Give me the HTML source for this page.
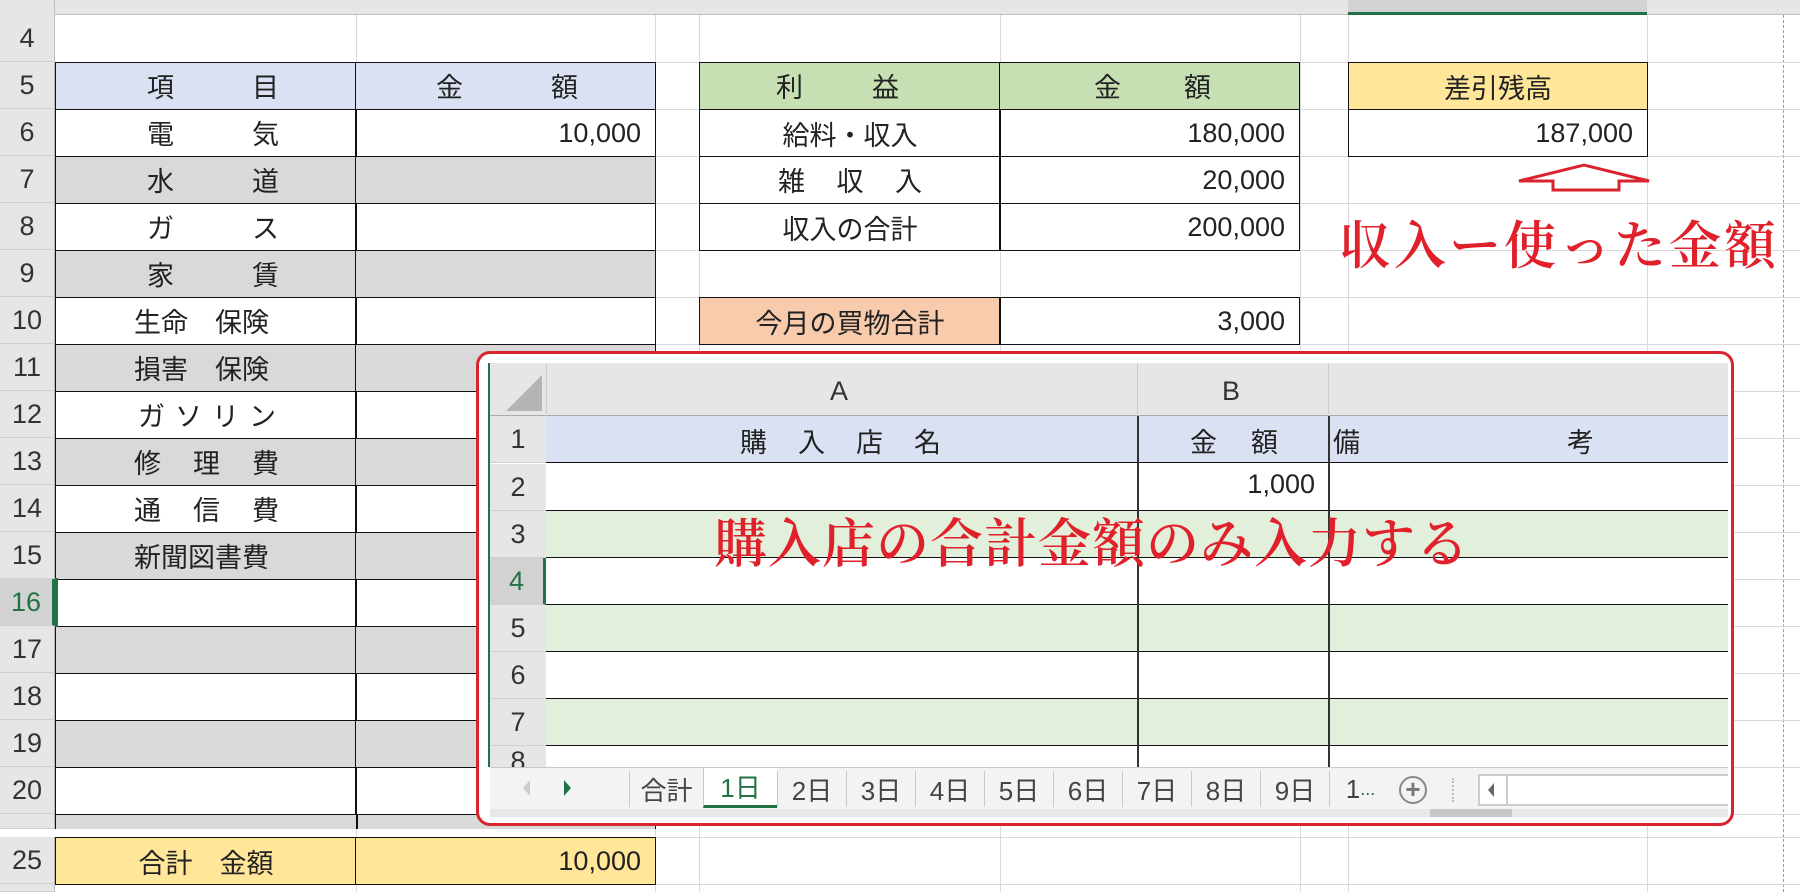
<!DOCTYPE html>
<html><head><meta charset="utf-8">
<style>
*{margin:0;padding:0;box-sizing:border-box}
body{width:1800px;height:892px;position:relative;overflow:hidden;background:#fff;font-family:"Liberation Sans","Noto Sans CJK JP",sans-serif;color:#222}
.a{position:absolute}
.hl{position:absolute;left:55px;width:1745px;height:1px;background:#d9d9d9}
.vl{position:absolute;top:15px;height:877px;width:1px;background:#d9d9d9}
.rh{position:absolute;left:0;width:55px;height:47px;background:#e6e6e6;border-bottom:1px solid #cfcfcf;border-right:1px solid #bdbdbd;font-size:27px;display:flex;align-items:center;justify-content:center;color:#333}
.c{position:absolute;height:48px;border:1.5px solid #111;font-size:27px;display:flex;align-items:center}
.sp{display:flex;justify-content:space-between;position:absolute}
.num{justify-content:flex-end;padding-right:14px}
.ctr{justify-content:center}
.ih{position:absolute;background:#e6e6e6}
.irh{position:absolute;left:490px;width:56px;height:47px;background:#e6e6e6;font-size:27px;display:flex;align-items:center;justify-content:center;color:#333;border-bottom:1px solid #d0d0d0}
.ir{position:absolute;left:546px;width:1182px;height:47px;border-bottom:1.5px solid #111}
.tab{position:absolute;top:771px;height:36px;width:69px;font-size:26px;display:flex;align-items:center;justify-content:center;color:#444;border-left:1px solid #c8c8c8}
</style></head><body>

<div class="a" style="left:0;top:0;width:1800px;height:15px;background:#e6e6e6;border-bottom:1px solid #bdbdbd"></div>
<div class="a" style="left:1348px;top:0;width:299px;height:15px;background:#d2d2d2;border-bottom:3px solid #217346"></div>
<div class="a" style="left:0;top:0;width:55px;height:15px;background:#e6e6e6;border-right:1px solid #bdbdbd"></div>

<div class="vl" style="left:356px"></div><div class="vl" style="left:655px"></div><div class="vl" style="left:699px"></div><div class="vl" style="left:1000px"></div><div class="vl" style="left:1300px"></div><div class="vl" style="left:1348px"></div><div class="vl" style="left:1647px"></div>
<div class="a" style="left:1783px;top:15px;height:877px;border-left:1px dashed #999"></div>
<div class="hl" style="top:62px"></div><div class="hl" style="top:109px"></div><div class="hl" style="top:156px"></div><div class="hl" style="top:203px"></div><div class="hl" style="top:250px"></div><div class="hl" style="top:297px"></div><div class="hl" style="top:344px"></div><div class="hl" style="top:391px"></div><div class="hl" style="top:438px"></div><div class="hl" style="top:485px"></div><div class="hl" style="top:532px"></div><div class="hl" style="top:579px"></div><div class="hl" style="top:626px"></div><div class="hl" style="top:673px"></div><div class="hl" style="top:720px"></div><div class="hl" style="top:767px"></div><div class="hl" style="top:814px"></div><div class="hl" style="top:837px"></div><div class="hl" style="top:884px"></div>

<div class="rh" style="top:15px">4</div><div class="rh" style="top:62px">5</div><div class="rh" style="top:109px">6</div><div class="rh" style="top:156px">7</div><div class="rh" style="top:203px">8</div><div class="rh" style="top:250px">9</div><div class="rh" style="top:297px">10</div><div class="rh" style="top:344px">11</div><div class="rh" style="top:391px">12</div><div class="rh" style="top:438px">13</div><div class="rh" style="top:485px">14</div><div class="rh" style="top:532px">15</div>
<div class="rh" style="top:579px;background:#d2d2d2;color:#217346;border-right:3px solid #217346">16</div>
<div class="rh" style="top:626px">17</div><div class="rh" style="top:673px">18</div><div class="rh" style="top:720px">19</div><div class="rh" style="top:767px">20</div>
<div class="rh" style="top:814px;height:15px"></div>
<div class="rh" style="top:837px">25</div>
<div class="rh" style="top:884px;height:8px"></div>

<div class="c" style="left:55px;top:62px;width:302px;background:#d9e1f2"></div><div class="c num" style="left:355px;top:62px;width:301px;background:#d9e1f2"></div>
<div class="sp" style="left:147px;top:66px;width:132px;font-size:27px"><span>項</span><span>目</span></div>
<div class="sp" style="left:436px;top:66px;width:142px;font-size:27px"><span>金</span><span>額</span></div>

<div class="c" style="left:55px;top:109px;width:302px"></div><div class="c num" style="left:355px;top:109px;width:301px">10,000</div>
<div class="c" style="left:55px;top:156px;width:302px;background:#d9d9d9"></div><div class="c" style="left:355px;top:156px;width:301px;background:#d9d9d9"></div>
<div class="c" style="left:55px;top:203px;width:302px"></div><div class="c" style="left:355px;top:203px;width:301px"></div>
<div class="c" style="left:55px;top:250px;width:302px;background:#d9d9d9"></div><div class="c" style="left:355px;top:250px;width:301px;background:#d9d9d9"></div>
<div class="c" style="left:55px;top:297px;width:302px"></div><div class="c" style="left:355px;top:297px;width:301px"></div>
<div class="c" style="left:55px;top:344px;width:302px;background:#d9d9d9"></div><div class="c" style="left:355px;top:344px;width:301px;background:#d9d9d9"></div>
<div class="c" style="left:55px;top:391px;width:302px"></div><div class="c" style="left:355px;top:391px;width:301px"></div>
<div class="c" style="left:55px;top:438px;width:302px;background:#d9d9d9"></div><div class="c" style="left:355px;top:438px;width:301px;background:#d9d9d9"></div>
<div class="c" style="left:55px;top:485px;width:302px"></div><div class="c" style="left:355px;top:485px;width:301px"></div>
<div class="c" style="left:55px;top:532px;width:302px;background:#d9d9d9"></div><div class="c" style="left:355px;top:532px;width:301px;background:#d9d9d9"></div>
<div class="c" style="left:55px;top:579px;width:302px"></div><div class="c" style="left:355px;top:579px;width:301px"></div>
<div class="c" style="left:55px;top:626px;width:302px;background:#d9d9d9"></div><div class="c" style="left:355px;top:626px;width:301px;background:#d9d9d9"></div>
<div class="c" style="left:55px;top:673px;width:302px"></div><div class="c" style="left:355px;top:673px;width:301px"></div>
<div class="c" style="left:55px;top:720px;width:302px;background:#d9d9d9"></div><div class="c" style="left:355px;top:720px;width:301px;background:#d9d9d9"></div>
<div class="c" style="left:55px;top:767px;width:302px"></div><div class="c" style="left:355px;top:767px;width:301px"></div>
<div class="a" style="left:55px;top:815px;width:601px;height:14px;background:#d9d9d9;border-left:1.5px solid #111;border-right:1.5px solid #111"></div>
<div class="a" style="left:356px;top:815px;width:1.5px;height:14px;background:#111"></div>
<div class="a" style="left:55px;top:578px;width:3px;height:49px;background:#217346"></div>

<div class="sp" style="left:147px;top:113px;width:132px;font-size:27px"><span>電</span><span>気</span></div>
<div class="sp" style="left:147px;top:160px;width:132px;font-size:27px"><span>水</span><span>道</span></div>
<div class="sp" style="left:147px;top:207px;width:132px;font-size:27px"><span>ガ</span><span>ス</span></div>
<div class="sp" style="left:147px;top:254px;width:132px;font-size:27px"><span>家</span><span>賃</span></div>
<div class="a" style="left:134px;top:301px;font-size:27px">生命　保険</div>
<div class="a" style="left:134px;top:348px;font-size:27px">損害　保険</div>
<div class="sp" style="left:138px;top:395px;width:138px;font-size:27px"><span>ガ</span><span>ソ</span><span>リ</span><span>ン</span></div>
<div class="sp" style="left:134px;top:442px;width:145px;font-size:27px"><span>修</span><span>理</span><span>費</span></div>
<div class="sp" style="left:134px;top:489px;width:145px;font-size:27px"><span>通</span><span>信</span><span>費</span></div>
<div class="a" style="left:134px;top:536px;font-size:27px">新聞図書費</div>

<div class="c ctr" style="left:55px;top:837px;width:302px;background:#ffe699">合計　金額</div>
<div class="c num" style="left:355px;top:837px;width:301px;background:#ffe699">10,000</div>

<div class="c" style="left:699px;top:62px;width:302px;background:#c6e0b4"></div><div class="c" style="left:999px;top:62px;width:301px;background:#c6e0b4"></div>
<div class="sp" style="left:776px;top:66px;width:123px;font-size:27px"><span>利</span><span>益</span></div>
<div class="sp" style="left:1094px;top:66px;width:117px;font-size:27px"><span>金</span><span>額</span></div>
<div class="c ctr" style="left:699px;top:109px;width:302px">給料・収入</div><div class="c num" style="left:999px;top:109px;width:301px">180,000</div>
<div class="c" style="left:699px;top:156px;width:302px"></div><div class="c num" style="left:999px;top:156px;width:301px">20,000</div>
<div class="sp" style="left:778px;top:160px;width:144px;font-size:27px"><span>雑</span><span>収</span><span>入</span></div>
<div class="c ctr" style="left:699px;top:203px;width:302px">収入の合計</div><div class="c num" style="left:999px;top:203px;width:301px">200,000</div>
<div class="c ctr" style="left:699px;top:297px;width:302px;background:#f8cbad">今月の買物合計</div><div class="c num" style="left:999px;top:297px;width:301px">3,000</div>

<div class="c ctr" style="left:1348px;top:62px;width:300px;background:#ffe699">差引残高</div>
<div class="c num" style="left:1348px;top:109px;width:300px">187,000</div>

<svg class="a" style="left:1515px;top:162px" width="140" height="30"><path d="M4 19 L69 3 L134 19 L104 19 L104 28 L38 28 L38 19 Z" fill="none" stroke="#d9242f" stroke-width="3"/></svg>
<div class="a" style="left:1339px;top:204px;font-family:'Noto Serif CJK SC','Noto Serif CJK JP',serif;font-weight:600;font-size:52px;color:#e0202a;letter-spacing:3px;white-space:nowrap">収入ー使った金額</div>

<div class="a" style="left:476px;top:351px;width:1258px;height:475px;border:3px solid #d9242f;border-radius:14px;background:#fff"></div>
<div class="a" style="left:488px;top:363px;width:1240px;height:454px;background:#fff"></div>
<div class="ih" style="left:490px;top:363px;width:1238px;height:53px;border-bottom:1.5px solid #aaa"></div>
<div class="a" style="left:488px;top:363px;width:2px;height:404px;background:#217346"></div>
<svg class="a" style="left:504px;top:373px" width="40" height="40"><path d="M38 2 L38 38 L2 38 Z" fill="#b4b4b4"/></svg>
<div class="a" style="left:546px;top:363px;width:1px;height:53px;background:#ccc"></div>
<div class="a" style="left:1137px;top:363px;width:1px;height:53px;background:#ccc"></div>
<div class="a" style="left:1328px;top:363px;width:1px;height:53px;background:#ccc"></div>
<div class="a" style="left:830px;top:376px;font-size:27px;color:#333">A</div>
<div class="a" style="left:1222px;top:376px;font-size:27px;color:#333">B</div>

<div class="ir" style="top:416px;background:#d9e1f2"></div>
<div class="ir" style="top:464px"></div>
<div class="ir" style="top:511px;background:#e2efda"></div>
<div class="ir" style="top:558px"></div>
<div class="ir" style="top:605px;background:#e2efda"></div>
<div class="ir" style="top:652px"></div>
<div class="ir" style="top:699px;background:#e2efda"></div>
<div class="ir" style="top:746px;border:none;height:22px"></div>
<div class="a" style="left:1137px;top:416px;width:1.5px;height:352px;background:#333"></div>
<div class="a" style="left:1328px;top:416px;width:1.5px;height:352px;background:#333"></div>

<div class="irh" style="top:416px">1</div><div class="irh" style="top:464px">2</div><div class="irh" style="top:511px">3</div>
<div class="irh" style="top:558px;background:#d2d2d2;color:#217346;border-right:3px solid #217346">4</div>
<div class="irh" style="top:605px">5</div><div class="irh" style="top:652px">6</div><div class="irh" style="top:699px">7</div>
<div class="irh" style="top:746px;height:22px;align-items:flex-start;overflow:hidden">8</div>

<div class="sp" style="left:740px;top:421px;width:201px;font-size:27px"><span>購</span><span>入</span><span>店</span><span>名</span></div>
<div class="sp" style="left:1190px;top:421px;width:88px;font-size:27px"><span>金</span><span>額</span></div>
<div class="a" style="left:1333px;top:421px;font-size:27px">備</div>
<div class="a" style="left:1567px;top:421px;font-size:27px">考</div>
<div class="a" style="left:1240px;top:469px;font-size:27px;width:75px;text-align:right">1,000</div>

<div class="a" style="left:714px;top:502px;font-family:'Noto Serif CJK SC','Noto Serif CJK JP',serif;font-weight:600;font-size:53px;color:#e0202a;white-space:nowrap;letter-spacing:1px">購入店の合計金額のみ入力する</div>

<div class="a" style="left:490px;top:767px;width:1238px;height:42px;background:#f3f3f3;border-top:1px solid #c8c8c8"></div>
<div class="a" style="left:523px;top:780px;width:0;height:0;border-top:8px solid transparent;border-bottom:8px solid transparent;border-right:7px solid #ccc"></div>
<div class="a" style="left:564px;top:780px;width:0;height:0;border-top:8px solid transparent;border-bottom:8px solid transparent;border-left:7px solid #217346"></div>
<div class="tab" style="left:629px;width:74px">合計</div>
<div class="tab" style="left:703px;width:74px;background:#fff;color:#217346;border-bottom:3px solid #217346;top:768px;height:40px">1日</div>
<div class="tab" style="left:777px">2日</div><div class="tab" style="left:846px">3日</div><div class="tab" style="left:915px">4日</div><div class="tab" style="left:984px">5日</div><div class="tab" style="left:1053px">6日</div><div class="tab" style="left:1122px">7日</div><div class="tab" style="left:1191px">8日</div><div class="tab" style="left:1260px">9日</div>
<div class="tab" style="left:1329px;width:62px;border-right:none">1<span style="color:#217346;font-size:18px">...</span></div>
<div class="a" style="left:1399px;top:776px;width:28px;height:28px;border:2px solid #888;border-radius:50%;color:#777;font-size:26px;line-height:22px;text-align:center;font-weight:700">+</div>
<div class="a" style="left:1452px;top:778px;height:24px;border-left:2px dotted #bbb"></div>
<div class="a" style="left:1478px;top:774px;width:250px;height:32px;background:#fff;border:2px solid #ccc;border-right:none"></div>
<div class="a" style="left:1478px;top:774px;width:30px;height:32px;border-right:2px solid #ccc"></div>
<div class="a" style="left:1488px;top:783px;width:0;height:0;border-top:7px solid transparent;border-bottom:7px solid transparent;border-right:6px solid #666"></div>
<div class="a" style="left:490px;top:809px;width:1238px;height:8px;background:#e8e8e8"></div>
<div class="a" style="left:1430px;top:809px;width:82px;height:8px;background:#c6c6c6"></div>
</body></html>
